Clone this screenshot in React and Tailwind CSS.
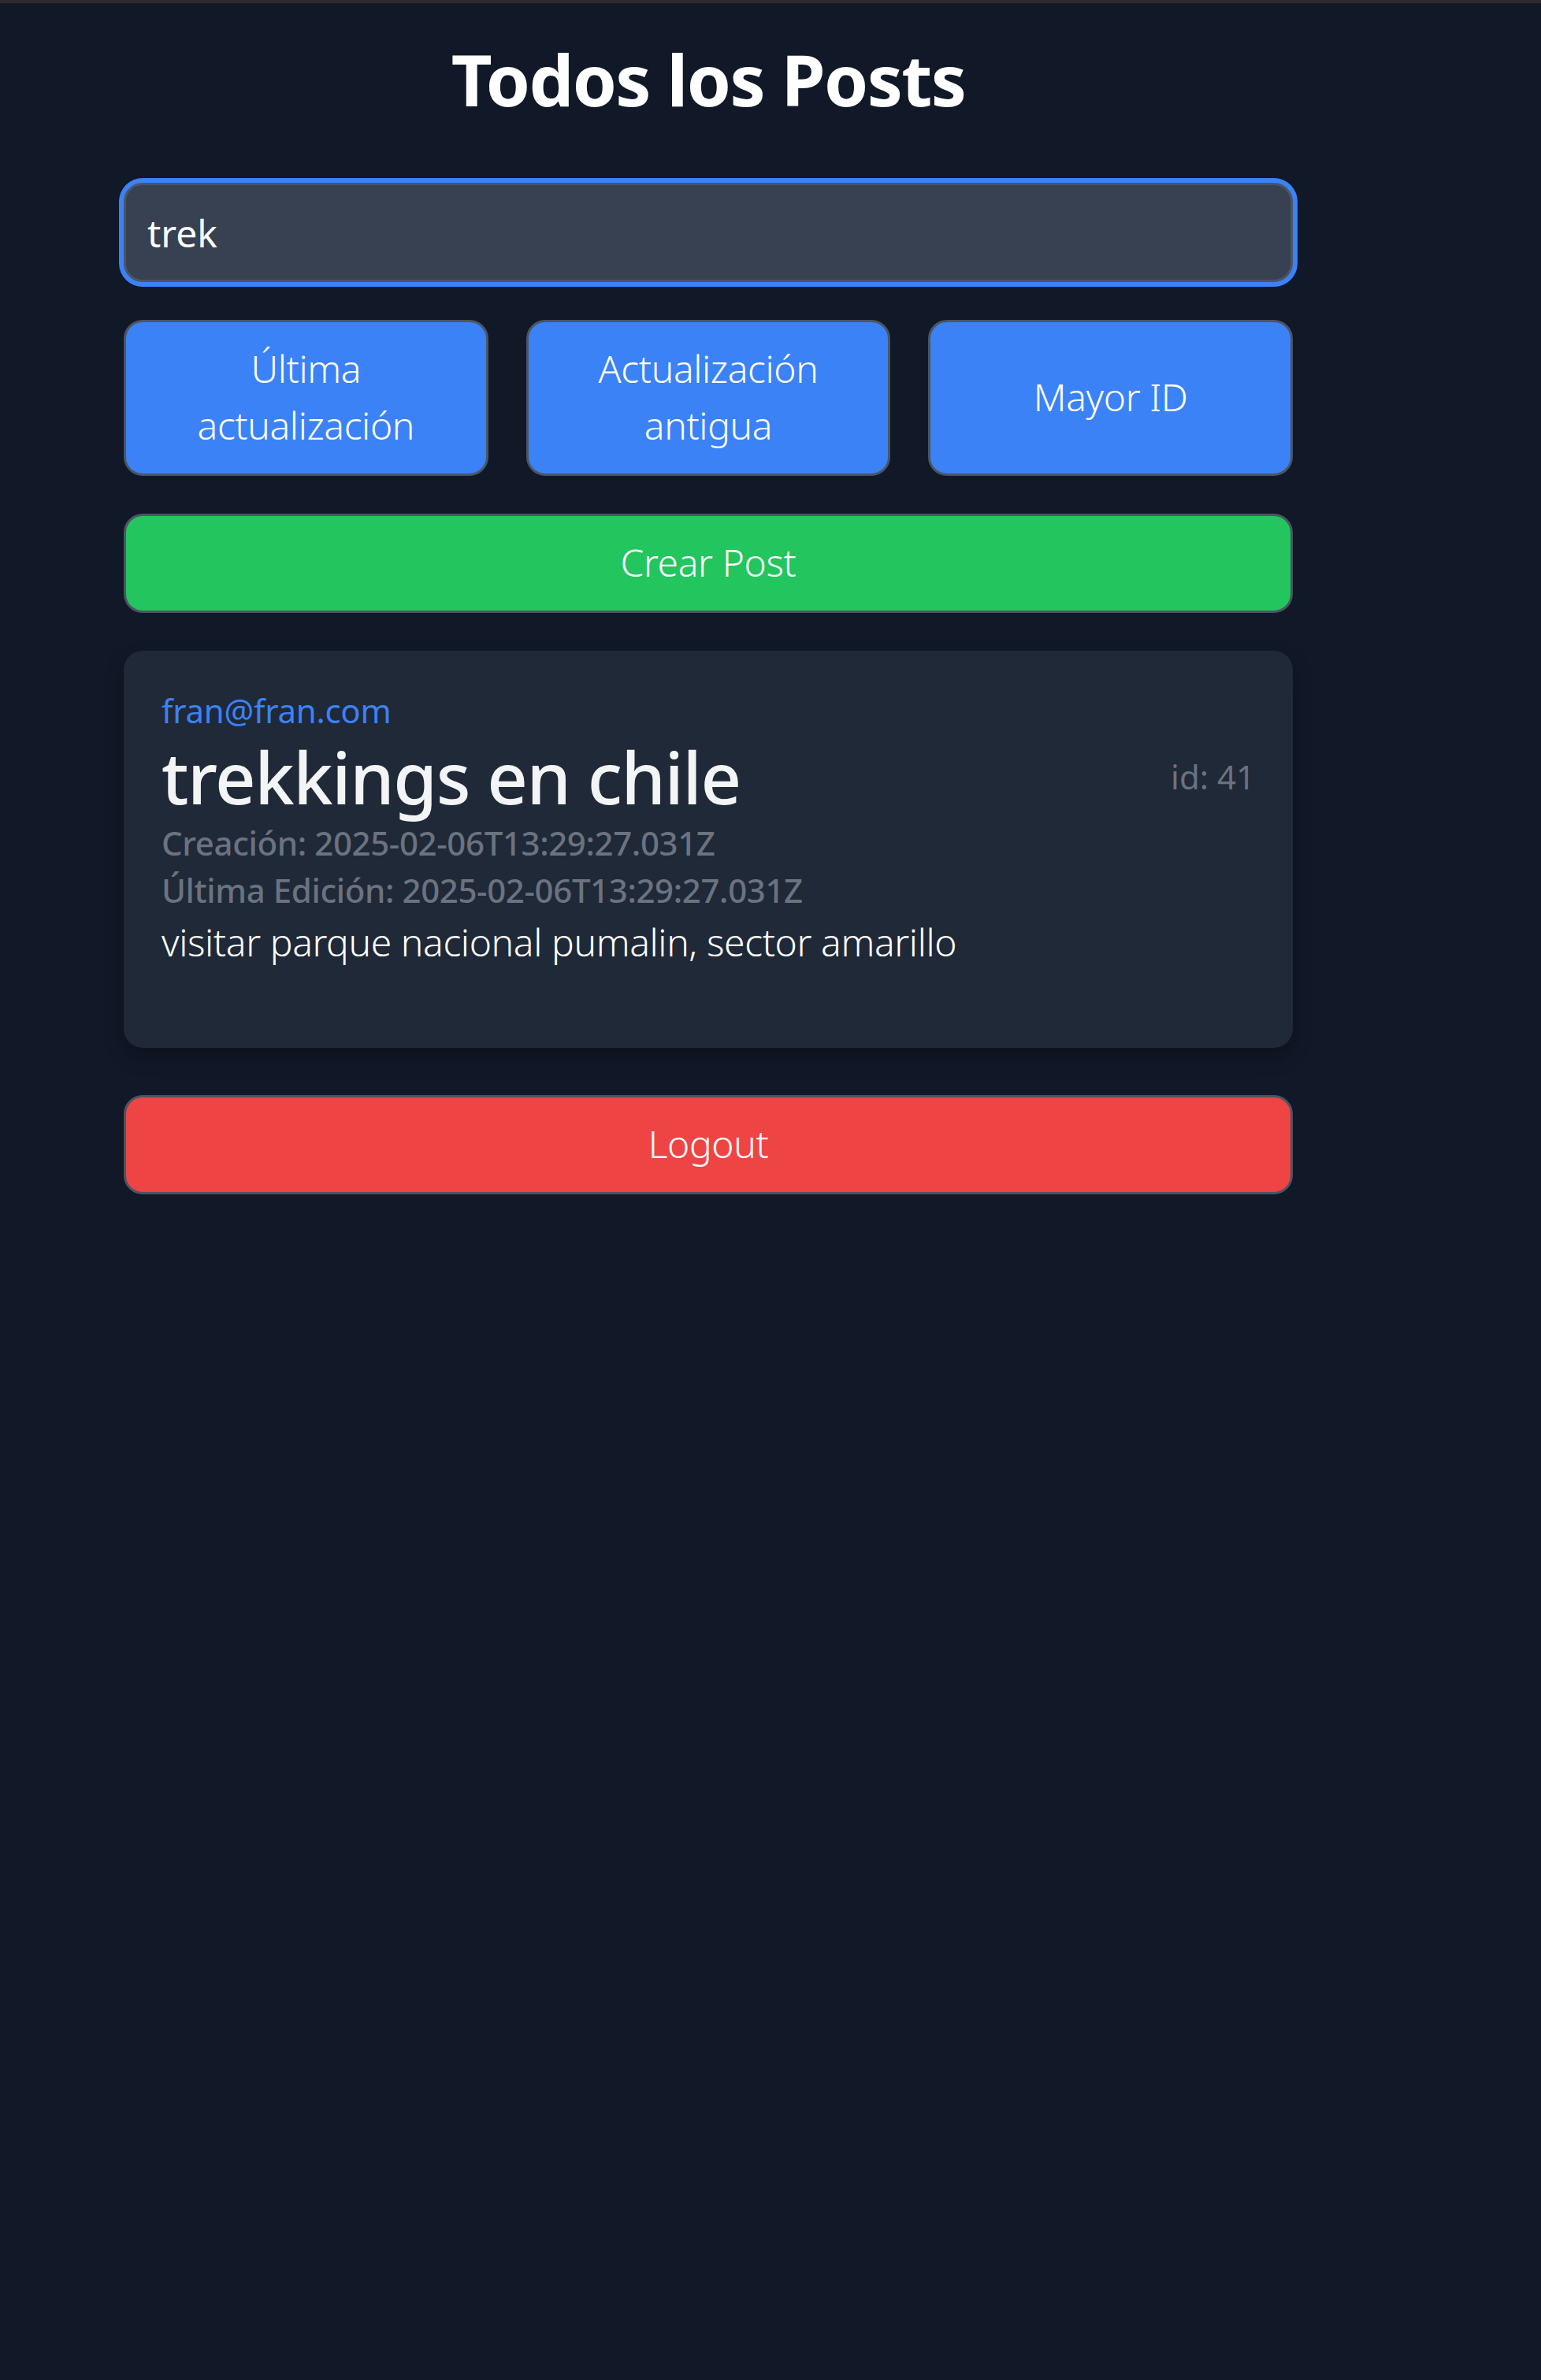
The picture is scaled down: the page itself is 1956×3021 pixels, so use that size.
import React, { useState } from "react";

const post = {
    id: 41,
    email: "fran@fran.com",
    title: "trekkings en chile",
    createdAt: "2025-02-06T13:29:27.031Z",
    updatedAt: "2025-02-06T13:29:27.031Z",
    content: "visitar parque nacional pumalin, sector amarillo",
};

export default function App() {
    const [search, setSearch] = useState("trek");

    return (
        <div className="min-h-screen bg-[#111827] font-['Noto_Sans',sans-serif] text-white">
            <div className="h-[4px] bg-[#2c2c2f]" />

            <div className="pt-[42px] pb-[48px]">
                <div className="ml-[157px] w-[1484px]">
                    <h1 className="text-center text-[90px] leading-[108px] font-bold tracking-[-0.018em]">
                        Todos los Posts
                    </h1>

                    {/* Search */}
                    <input
                        type="text"
                        value={search}
                        onChange={(e) => setSearch(e.target.value)}
                        className="mt-[78px] block w-full h-[126px] px-[27px] bg-[#374151] border-[3px] border-[#4b5563] rounded-[24px] text-[48px] text-white outline-none ring-[6px] ring-[#3b82f6]"
                    />

                    {/* Sort buttons */}
                    <div className="mt-[48px] grid grid-cols-3 gap-[48px]">
                        <button className="h-[198px] pb-[3px] bg-[#3b82f6] border-[3px] border-[#4b5563] rounded-[24px] text-[48px] leading-[72px] text-white font-light tracking-[-0.008em]">
                            Última
                            <br />
                            actualización
                        </button>
                        <button className="h-[198px] pb-[3px] bg-[#3b82f6] border-[3px] border-[#4b5563] rounded-[24px] text-[48px] leading-[72px] text-white font-light tracking-[-0.008em]">
                            Actualización
                            <br />
                            antigua
                        </button>
                        <button className="h-[198px] pb-[3px] bg-[#3b82f6] border-[3px] border-[#4b5563] rounded-[24px] text-[48px] leading-[72px] text-white font-light tracking-[-0.008em]">
                            Mayor ID
                        </button>
                    </div>

                    <button className="mt-[48px] w-full h-[126px] pb-[3px] bg-[#22c55e] border-[3px] border-[#4b5563] rounded-[24px] text-[48px] leading-[72px] text-white font-light tracking-[-0.008em]">
                        Crear Post
                    </button>

                    {/* Post card */}
                    <div className="mt-[48px] bg-[#1f2937] rounded-[24px] shadow-[0_12px_24px_rgba(0,0,0,0.25)] px-[48px] pt-[46px] pb-[98px]">
                        <p className="text-[42px] leading-[60px] text-[#3b82f6] tracking-[-0.006em]">{post.email}</p>
                        <div className="flex items-center justify-between">
                            <h2 className="text-[90px] leading-[108px] font-medium text-[#f3f4f6] tracking-[-0.015em]">
                                {post.title}
                            </h2>
                            <span className="text-[42px] leading-[60px] text-[#6b7280]">id: {post.id}</span>
                        </div>
                        <p className="text-[42px] leading-[60px] font-medium text-[#6b7280] tracking-[-0.009em]">
                            Creación: {post.createdAt}
                        </p>
                        <p className="text-[42px] leading-[60px] font-medium text-[#6b7280] tracking-[-0.009em]">
                            Última Edición: {post.updatedAt}
                        </p>
                        <p className="text-[48px] leading-[72px] font-light text-white tracking-[-0.008em]">{post.content}</p>
                    </div>

                    <button className="mt-[60px] w-full h-[126px] pb-[3px] bg-[#ef4444] border-[3px] border-[#4b5563] rounded-[24px] text-[48px] leading-[72px] text-white font-light tracking-[-0.008em]">
                        Logout
                    </button>
                </div>
            </div>
        </div>
    );
}
